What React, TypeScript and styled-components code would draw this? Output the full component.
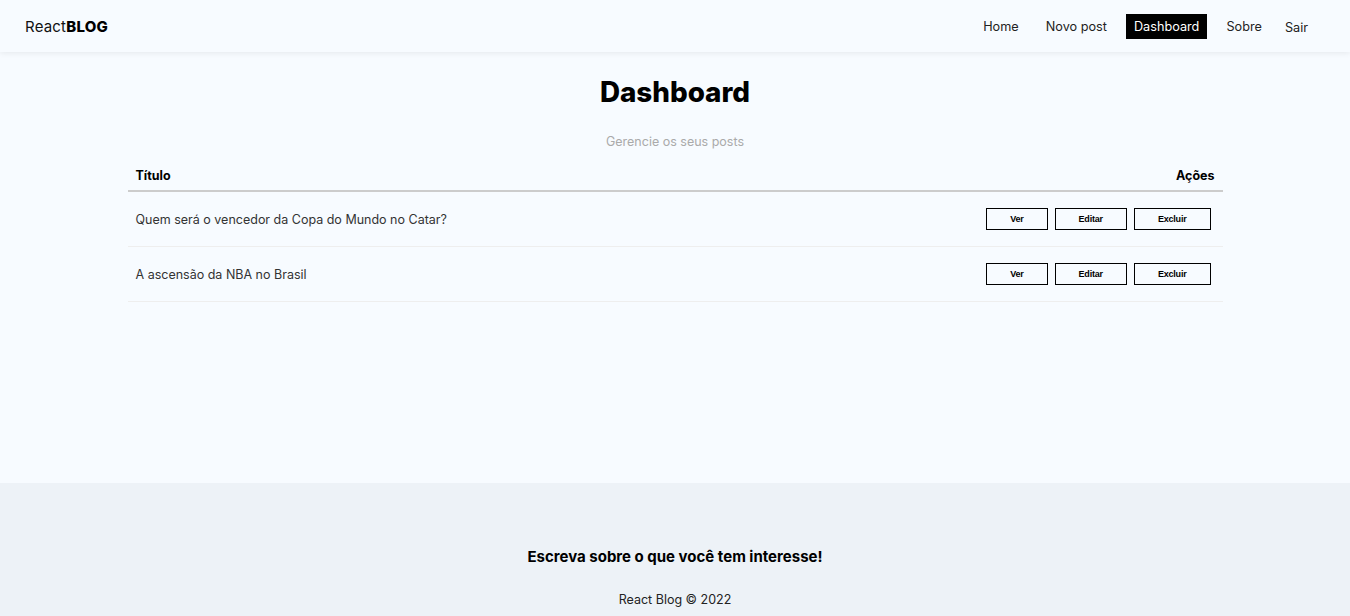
import React from "react";
import styled, { createGlobalStyle } from "styled-components";

const GlobalStyle = createGlobalStyle`
  * { box-sizing: border-box; }
  body {
    margin: 0;
    font-family: Inter, "Open Sans", sans-serif;
    background: #f7fbff;
    color: #000;
  }
`;

const Navbar = styled.nav`
  height: 52px;
  display: flex;
  align-items: center;
  justify-content: space-between;
  padding: 0 32px 0 25px;
  background: #f7fbff;
  box-shadow: 0 1px 6px rgba(0, 0, 0, 0.08);
  position: relative;
`;

const Brand = styled.a`
  font-size: 15px;
  letter-spacing: 0.2px;
  color: #111;
  text-decoration: none;
  strong { font-weight: 800; color: #000; }
`;

const NavList = styled.ul`
  display: flex;
  align-items: center;
  gap: 11px;
  list-style: none;
  margin: 0;
  padding: 0;
`;

const NavLink = styled.a<{ $active?: boolean }>`
  display: block;
  padding: 5px 8px;
  font-size: 12.7px;
  line-height: 15px;
  color: ${(p) => (p.$active ? "#fff" : "#222")};
  background: ${(p) => (p.$active ? "#000" : "transparent")};
  text-decoration: none;
`;

const LogoutButton = styled.button`
  background: none;
  border: none;
  font-family: inherit;
  font-size: 12.7px;
  color: #222;
  padding: 7px 10px 5px 4px;
  cursor: pointer;
`;

const Main = styled.main`
  min-height: 431px;
  padding-top: 20px;
`;

const Title = styled.h1`
  margin: 0;
  text-align: center;
  font-size: 27.8px;
  line-height: 40px;
  font-weight: 800;
`;

const Subtitle = styled.p`
  margin: 20px 0 9px;
  text-align: center;
  font-size: 12.5px;
  line-height: 20px;
  color: #aaa;
`;

const Table = styled.div`
  width: 1095px;
  margin: 0 auto;
`;

const HeaderRow = styled.div`
  display: flex;
  justify-content: space-between;
  align-items: center;
  height: 31px;
  padding: 0 8px 1px;
  border-bottom: 2px solid #ccc;
  font-weight: 700;
  font-size: 12.5px;
`;

const Row = styled.div`
  display: flex;
  justify-content: space-between;
  align-items: center;
  height: 55px;
  padding: 0 12px 0 8px;
  border-bottom: 1px solid #eee;
`;

const PostTitle = styled.span`
  font-size: 12.5px;
  color: #333;
`;

const Actions = styled.div`
  display: flex;
  gap: 7px;
`;

const ActionButton = styled.button`
  font-family: "Liberation Sans", Arial, sans-serif;
  font-weight: 700;
  font-size: 9px;
  line-height: 10px;
  letter-spacing: -0.2px;
  padding: 5px 23px;
  height: 22px;
  background: transparent;
  border: 1px solid #000;
  color: #000;
  cursor: pointer;
`;

const Footer = styled.footer`
  background: #edf2f7;
  padding: 64px 0 20px;
  text-align: center;
`;

const FooterHeading = styled.h3`
  margin: 0;
  font-size: 15px;
  line-height: 20px;
  font-weight: 700;
`;

const FooterText = styled.p`
  margin: 23px 0 0;
  font-size: 12.5px;
  line-height: 20px;
  color: #222;
`;

const posts = [
  "Quem será o vencedor da Copa do Mundo no Catar?",
  "A ascensão da NBA no Brasil",
];

export default function App() {
  return (
    <>
      <GlobalStyle />
      <Navbar>
        <Brand href="#">
          React<strong>BLOG</strong>
        </Brand>
        <NavList>
          <li><NavLink href="#">Home</NavLink></li>
          <li><NavLink href="#">Novo post</NavLink></li>
          <li><NavLink href="#" $active>Dashboard</NavLink></li>
          <li><NavLink href="#">Sobre</NavLink></li>
          <li><LogoutButton>Sair</LogoutButton></li>
        </NavList>
      </Navbar>
      <Main>
        <Title>Dashboard</Title>
        <Subtitle>Gerencie os seus posts</Subtitle>
        <Table>
          <HeaderRow>
            <span>Título</span>
            <span>Ações</span>
          </HeaderRow>
          {posts.map((t) => (
            <Row key={t}>
              <PostTitle>{t}</PostTitle>
              <Actions>
                <ActionButton>Ver</ActionButton>
                <ActionButton>Editar</ActionButton>
                <ActionButton>Excluir</ActionButton>
              </Actions>
            </Row>
          ))}
        </Table>
      </Main>
      <Footer>
        <FooterHeading>Escreva sobre o que você tem interesse!</FooterHeading>
        <FooterText>React Blog © 2022</FooterText>
      </Footer>
    </>
  );
}
